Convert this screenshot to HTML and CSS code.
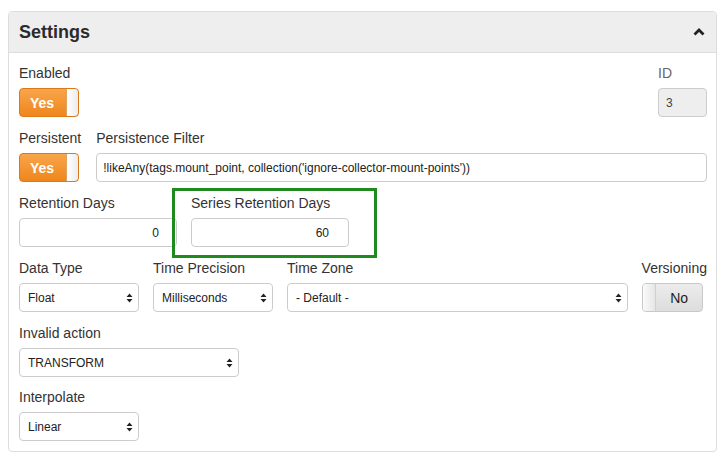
FILE: index.html
```html
<!DOCTYPE html>
<html>
<head>
<meta charset="utf-8">
<link rel="stylesheet" href="styles.css">
</head>
<body>
<div class="panel">
  <div class="panel-head">
    <h3 class="title">Settings</h3>
    <svg class="chev" width="12" height="8" viewBox="0 0 12 8"><polyline points="1.5,6.5 6,2 10.5,6.5" fill="none" stroke="#222" stroke-width="2.8"/></svg>
  </div>
  <div class="panel-body">
    <div class="row between">
      <div class="group">
        <label class="lbl">Enabled</label>
        <div class="toggle on"><span class="tog-text">Yes</span><span class="knob"></span></div>
      </div>
      <div class="group id-col">
        <label class="lbl muted">ID</label>
        <input class="inp id-inp" value="3" readonly>
      </div>
    </div>
    <div class="row">
      <div class="group">
        <label class="lbl">Persistent</label>
        <div class="toggle on"><span class="tog-text">Yes</span><span class="knob"></span></div>
      </div>
      <div class="group grow">
        <label class="lbl">Persistence Filter</label>
        <input class="inp" value="!likeAny(tags.mount_point, collection('ignore-collector-mount-points'))">
      </div>
    </div>
    <div class="row ret-row">
      <div class="group w158">
        <label class="lbl">Retention Days</label>
        <input class="inp num" value="0">
      </div>
      <div class="group w158">
        <label class="lbl">Series Retention Days</label>
        <input class="inp num num2" value="60">
      </div>
      <div class="highlight"></div>
    </div>
    <div class="row four">
      <div class="group w120">
        <label class="lbl">Data Type</label>
        <div class="sel"><select><option>Float</option></select><svg class="arr" width="7" height="10" viewBox="0 0 7 10"><path d="M0.5 4 L3.5 0.5 L6.5 4 Z M0.5 6 L3.5 9.5 L6.5 6 Z" fill="#222"/></svg></div>
      </div>
      <div class="group w120">
        <label class="lbl">Time Precision</label>
        <div class="sel"><select><option>Milliseconds</option></select><svg class="arr" width="7" height="10" viewBox="0 0 7 10"><path d="M0.5 4 L3.5 0.5 L6.5 4 Z M0.5 6 L3.5 9.5 L6.5 6 Z" fill="#222"/></svg></div>
      </div>
      <div class="group grow">
        <label class="lbl">Time Zone</label>
        <div class="sel"><select><option>- Default -</option></select><svg class="arr" width="7" height="10" viewBox="0 0 7 10"><path d="M0.5 4 L3.5 0.5 L6.5 4 Z M0.5 6 L3.5 9.5 L6.5 6 Z" fill="#222"/></svg></div>
      </div>
      <div class="group">
        <label class="lbl">Versioning</label>
        <div class="toggle off"><span class="knob"></span><span class="tog-text">No</span></div>
      </div>
    </div>
    <div class="row tight">
      <div class="group w220">
        <label class="lbl">Invalid action</label>
        <div class="sel"><select><option>TRANSFORM</option></select><svg class="arr" width="7" height="10" viewBox="0 0 7 10"><path d="M0.5 4 L3.5 0.5 L6.5 4 Z M0.5 6 L3.5 9.5 L6.5 6 Z" fill="#222"/></svg></div>
      </div>
    </div>
    <div class="row last">
      <div class="group w120">
        <label class="lbl">Interpolate</label>
        <div class="sel"><select><option>Linear</option></select><svg class="arr" width="7" height="10" viewBox="0 0 7 10"><path d="M0.5 4 L3.5 0.5 L6.5 4 Z M0.5 6 L3.5 9.5 L6.5 6 Z" fill="#222"/></svg></div>
      </div>
    </div>
  </div>
</div>
</body>
</html>
```
FILE: styles.css
```css
* { box-sizing: border-box; }
html, body { margin: 0; padding: 0; background: #fff; }
body {
  font-family: "Liberation Sans", Arial, Helvetica, sans-serif;
  color: #333;
  padding: 11px 10px 0 8px;
}
.panel {
  width: 709px;
  border: 1px solid #dddddd;
  border-radius: 4px;
  background: #fff;
}
.panel-head {
  height: 41px;
  background: #eeeeee;
  border-bottom: 1px solid #dddddd;
  border-radius: 3px 3px 0 0;
  display: flex;
  align-items: center;
  justify-content: space-between;
  padding: 0 10px 0 10px;
}
.title {
  margin: 0;
  font-size: 18px;
  font-weight: bold;
  color: #2b2b2b;
  line-height: 20px;
}
.chev { margin-right: 1px; margin-top: -1px; }
.panel-body {
  padding: 10px 9px 10px 10px;
}
.row {
  display: flex;
  gap: 15px;
  margin-bottom: 11px;
}
.row.four { gap: 14px; }
.row.tight { margin-bottom: 10px; }
.row.last { margin-bottom: 0; }
.row.between { justify-content: space-between; }
.ret-row { gap: 14px; position: relative; }
.group { display: flex; flex-direction: column; }
.grow { flex: 1; }
.w158 { width: 158px; }
.w120 { width: 120px; }
.w220 { width: 220px; }
.id-col { width: 49px; }
.lbl {
  font-size: 14px;
  line-height: 20px;
  margin-bottom: 5px;
  white-space: nowrap;
}
.muted { color: #666; }
.inp {
  height: 29px;
  width: 100%;
  border: 1px solid #cccccc;
  border-radius: 4px;
  font-family: "Liberation Sans", Arial, sans-serif;
  font-size: 12px;
  color: #222;
  padding: 0 6px;
  background: #fff;
  outline: none;
}
.id-inp { background: #eeeeee; color: #444; padding-left: 7px; }
.num { text-align: right; padding-right: 17px; }
.num2 { padding-right: 19px; }
.highlight {
  position: absolute;
  left: 153px;
  top: -5px;
  width: 205px;
  height: 70px;
  border: 3px solid #1f8b1f;
  pointer-events: none;
}
.toggle {
  height: 29px;
  border-radius: 4px;
  display: flex;
  overflow: hidden;
  font-size: 14px;
}
.toggle.on {
  width: 60px;
  border: 1px solid #d9791a;
  background: linear-gradient(#f9a54b, #ef861c);
}
.toggle.on .tog-text {
  flex: 1;
  color: #fff;
  font-weight: bold;
  display: flex;
  align-items: center;
  justify-content: center;
  padding-right: 2px;
}
.toggle.on .knob {
  width: 12px;
  background: linear-gradient(to right, #ffffff, #ececec);
  border-left: 1px solid #e0a060;
  border-radius: 0 3px 3px 0;
}
.toggle.off {
  width: 61px;
  border: 1px solid #c8c8c8;
  background: linear-gradient(#ececec, #dddddd);
}
.toggle.off .knob {
  width: 13px;
  background: linear-gradient(to right, #fafafa, #e6e6e6);
  border-right: 1px solid #cfcfcf;
}
.toggle.off .tog-text {
  flex: 1;
  color: #222;
  display: flex;
  align-items: center;
  justify-content: center;
  padding-left: 1px;
}
.sel {
  position: relative;
  height: 29px;
}
.sel select {
  -webkit-appearance: none;
  appearance: none;
  width: 100%;
  height: 29px;
  border: 1px solid #cccccc;
  border-radius: 4px;
  background: #fff;
  font-family: "Liberation Sans", Arial, sans-serif;
  font-size: 12px;
  color: #222;
  padding: 0 20px 0 8px;
  outline: none;
}
.arr {
  position: absolute;
  right: 6px;
  top: 10px;
  pointer-events: none;
}
```
